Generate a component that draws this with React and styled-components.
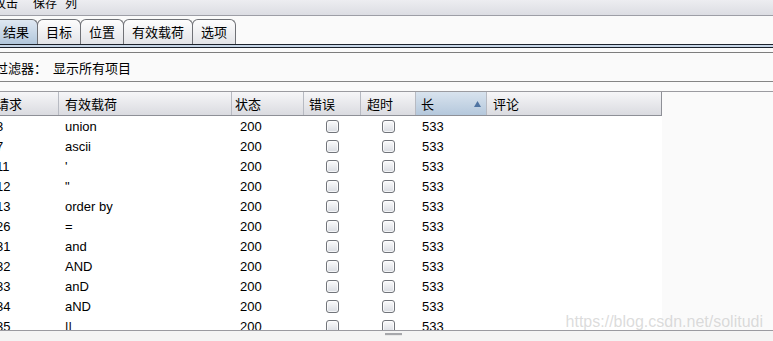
import React from "react";
import styled, { createGlobalStyle, css } from "styled-components";

const GlobalStyle = createGlobalStyle`
  html, body { margin: 0; padding: 0; background: #fafafa; }
  #root { width: 773px; height: 341px; }
`;

const CJK = `"Noto Sans CJK SC", "Liberation Sans", sans-serif`;
const LATIN = `"Liberation Sans", "Noto Sans CJK SC", sans-serif`;

const Frame = styled.div`
  width: 773px;
  height: 341px;
  overflow: hidden;
  position: relative;
  background: #fafafa;
  font-family: ${LATIN};
  color: #000;
`;

const Shift = styled.div`
  margin-left: -6px;
  width: 779px;
  height: 100%;
  display: flex;
  flex-direction: column;
`;

const MenuBar = styled.div`
  margin-top: -9px;
  height: 24px;
  flex: none;
  display: flex;
  align-items: center;
  background: linear-gradient(#f7f7f9, #dcdde3);
  border-bottom: 1px solid #9d9ea6;
`;

const MenuItem = styled.span`
  font-family: ${CJK};
  font-size: 12px;
  line-height: 24px;
  margin-left: ${(p) => p.$gap}px;
`;

const TabStrip = styled.div`
  height: 28px;
  flex: none;
  display: flex;
  align-items: flex-end;
  padding-left: 1px;
  box-sizing: border-box;
`;

const Tab = styled.div`
  height: 24px;
  padding: 0 8px;
  border: 1px solid #6f7176;
  border-bottom: none;
  border-radius: 6px 6px 0 0;
  margin-left: -1px;
  display: flex;
  align-items: center;
  font-family: ${CJK};
  font-size: 13px;
  line-height: 24px;
  background: linear-gradient(#fdfdfd, #e3e4e8);
  ${(p) =>
    p.$active &&
    css`
      background: linear-gradient(#dfe8f2, #b2c7dc);
    `}
`;

const TabRule = styled.div`
  flex: none;
  height: 2px;
  background: #c7d6e7;
  border-top: 1px solid #1c222c;
  border-bottom: 1px solid #1c222c;
`;

const Spacer = styled.div`
  flex: none;
  height: ${(p) => p.$h}px;
`;

const FilterBar = styled.div`
  flex: none;
  height: 28px;
  border-top: 1px solid #7d7d7d;
  border-bottom: 1px solid #858585;
  display: flex;
  align-items: center;
  padding-left: 1px;
  font-family: ${CJK};
  font-size: 13px;
`;

const FilterValue = styled.span`
  margin-left: 6px;
`;

const TablePane = styled.div`
  flex: 1;
  min-height: 0;
  overflow: hidden;
  border-top: 1px solid #9b9ba0;
`;

const COLS = "65px 173px 72px 57px 55px 71px 175px";

const HeaderRow = styled.div`
  display: grid;
  grid-template-columns: ${COLS};
  width: 668px;
  height: 23px;
  border-bottom: 1px solid #8e9097;
  background: linear-gradient(#f6f6f8, #dadbe0);
`;

const HeaderCell = styled.div`
  position: relative;
  display: flex;
  align-items: center;
  padding-left: ${(p) => p.$pad ?? 5}px;
  border-right: 1px solid ${(p) => (p.$last ? "#8e9097" : "#b7bac2")};
  font-family: ${CJK};
  font-size: 13px;
  line-height: 23px;
  ${(p) =>
    p.$sorted &&
    css`
      background: linear-gradient(#d8e3ee, #b5c8dc);
    `}
`;

const SortArrow = styled.svg`
  position: absolute;
  right: 5px;
  top: 9px;
`;

const Row = styled.div`
  display: grid;
  grid-template-columns: ${COLS};
  width: 668px;
  height: 20px;
  background: #fff;
`;

const Cell = styled.div`
  padding-left: ${(p) => p.$pad ?? 5}px;
  padding-top: 1px;
  height: 20px;
  box-sizing: border-box;
  font-size: 13px;
  line-height: 20px;
  white-space: pre;
  overflow: hidden;
  ${(p) =>
    p.$center &&
    css`
      display: flex;
      align-items: center;
      justify-content: center;
      padding-left: 0;
    `}
`;

const Check = styled.span`
  width: 11px;
  height: 11px;
  border: 1px solid #71747a;
  border-radius: 3px;
  background: linear-gradient(#fbfbfc, #d9dce2);
  box-shadow: inset 0 0 0 1px rgba(255, 255, 255, 0.7);
`;

const BottomBar = styled.div`
  flex: none;
  height: 10px;
  border-top: 1px solid #9a9aa0;
  background: #f4f4f4;
  display: flex;
  justify-content: center;
  padding-left: 20px;
`;

const Grip = styled.span`
  margin-top: 2px;
  width: 17px;
  height: 2px;
  background: #a6a7ab;
  border-bottom: 1px solid #e8e8e8;
`;

const Watermark = styled.div`
  position: absolute;
  right: 10px;
  top: 313px;
  font-family: ${LATIN};
  font-size: 16px;
  color: rgba(190, 190, 190, 0.55);
  pointer-events: none;
`;

const rows = [
  ["3", "union"],
  ["7", "ascii"],
  ["11", "'"],
  ["12", '"'],
  ["13", "order by"],
  ["26", "="],
  ["31", "and"],
  ["32", "AND"],
  ["33", "anD"],
  ["34", "aND"],
  ["35", "||"],
];

const tabs = ["结果", "目标", "位置", "有效载荷", "选项"];

export default function App() {
  return (
    <Frame>
      <GlobalStyle />
      <Shift>
        <MenuBar>
          <MenuItem $gap={0}>攻击</MenuItem>
          <MenuItem $gap={15}>保存</MenuItem>
          <MenuItem $gap={8}>列</MenuItem>
        </MenuBar>
        <TabStrip>
          {tabs.map((t, i) => (
            <Tab key={t} $active={i === 0}>
              {t}
            </Tab>
          ))}
        </TabStrip>
        <TabRule />
        <Spacer $h={4} />
        <FilterBar>
          过滤器：<FilterValue>显示所有项目</FilterValue>
        </FilterBar>
        <Spacer $h={9} />
        <TablePane>
          <HeaderRow>
            <HeaderCell $pad={2}>请求</HeaderCell>
            <HeaderCell $pad={6}>有效载荷</HeaderCell>
            <HeaderCell $pad={3}>状态</HeaderCell>
            <HeaderCell>错误</HeaderCell>
            <HeaderCell $pad={6}>超时</HeaderCell>
            <HeaderCell $sorted>
              长
              <SortArrow width="7" height="6" viewBox="0 0 7 6">
                <path d="M3.5 0 L7 6 L0 6 Z" fill="#4f74a2" />
              </SortArrow>
            </HeaderCell>
            <HeaderCell $pad={6} $last>
              评论
            </HeaderCell>
          </HeaderRow>
          {rows.map(([n, p]) => (
            <Row key={n}>
              <Cell $pad={2}>{n}</Cell>
              <Cell $pad={6}>{p}</Cell>
              <Cell $pad={8}>200</Cell>
              <Cell $center>
                <Check />
              </Cell>
              <Cell $center>
                <Check />
              </Cell>
              <Cell $pad={6}>533</Cell>
              <Cell />
            </Row>
          ))}
        </TablePane>
        <BottomBar>
          <Grip />
        </BottomBar>
      </Shift>
      <Watermark>https://blog.csdn.net/solitudi</Watermark>
    </Frame>
  );
}
